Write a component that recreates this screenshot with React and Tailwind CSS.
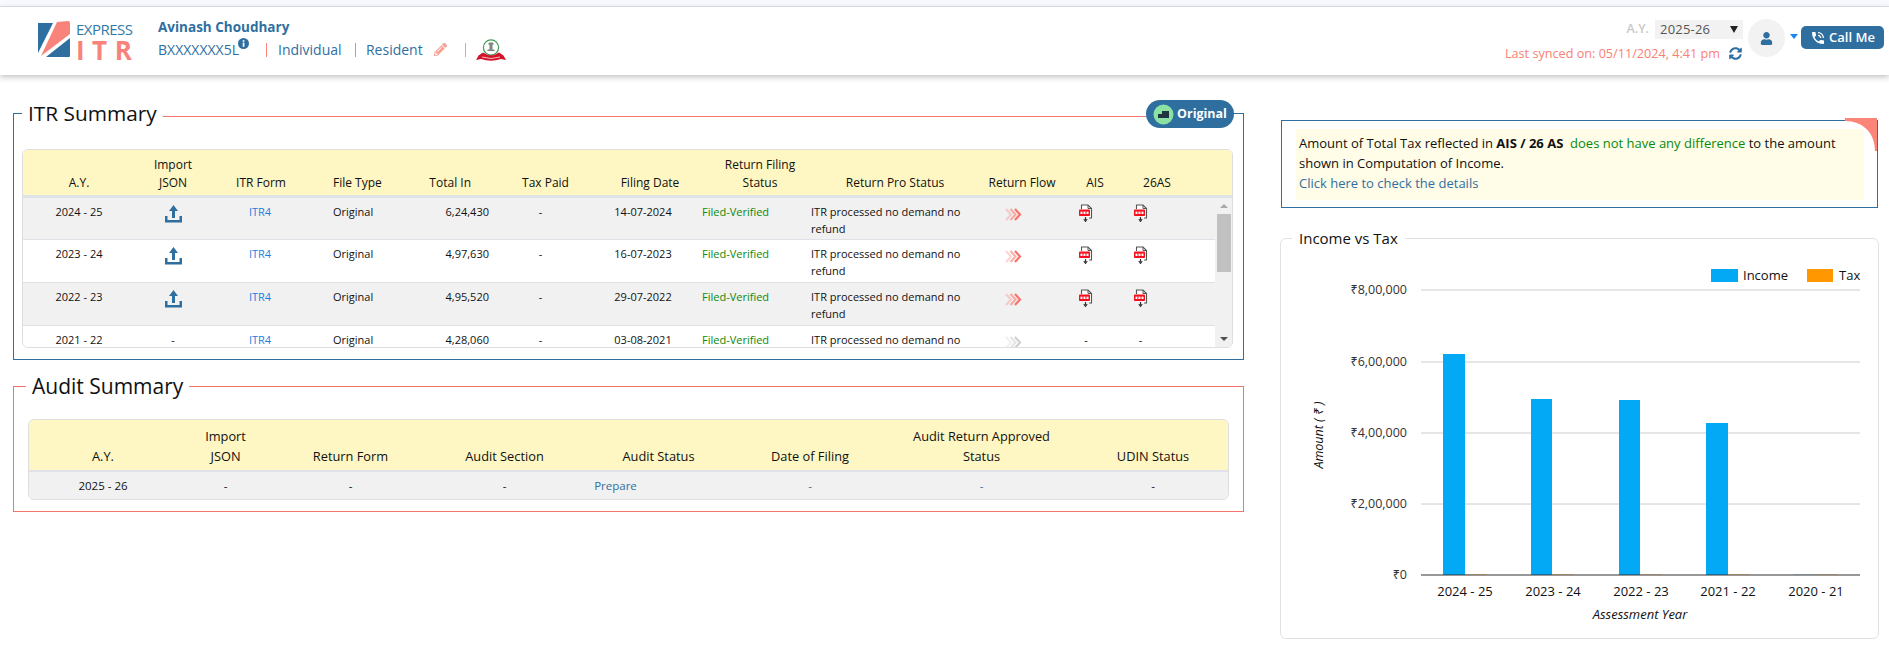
import React from "react";
import { FaPencilAlt, FaSyncAlt, FaUser } from "react-icons/fa";
import { MdPhoneInTalk } from "react-icons/md";

const FONT = "font-['Open_Sans','Noto_Sans',sans-serif]";

function Upload() {
  return (
    <svg width="17" height="18" viewBox="0 0 17 18" fill="#2f6f9f" className="mt-[2px]">
      <path d="M8.5 0 L13 6 H10 V13 H7 V6 H4 Z" />
      <path d="M0 11 H2.5 V15 H14.5 V11 H17 V17.5 H0 Z" />
    </svg>
  );
}

function Chevrons({ grey }) {
  const c = grey ? "#cfcfcf" : "#f8736a";
  return (
    <svg width="17" height="13" viewBox="0 0 17 13" fill="none" strokeWidth="2.2">
      <path d="M1 1 L6 6.5 L1 12" stroke={c} opacity=".3" />
      <path d="M5.5 1 L10.5 6.5 L5.5 12" stroke={c} opacity=".55" />
      <path d="M10 1 L15 6.5 L10 12" stroke={c} />
    </svg>
  );
}

function Pdf() {
  return (
    <svg width="14" height="18" viewBox="0 0 14 18" className="mt-[1px]">
      <path d="M2.5 5 V1 H9 L12.5 4.5 V14 H10" fill="#fff" stroke="#555" strokeWidth="1.1" />
      <path d="M9 1 V4.5 H12.5" fill="none" stroke="#555" strokeWidth="1" />
      <rect x="0" y="5.5" width="11" height="6.5" rx=".8" fill="#f5101c" />
      <rect x="1.5" y="7.6" width="2" height="2.4" fill="#fff" />
      <rect x="4.5" y="7.6" width="2" height="2.4" fill="#fff" />
      <rect x="7.5" y="7.6" width="2" height="2.4" fill="#fff" />
      <path d="M6.5 13 V16 M4.8 15 L6.5 17.5 L8.2 15" stroke="#333" strokeWidth="1.1" fill="none" />
    </svg>
  );
}

function Emblem() {
  return (
    <svg width="32" height="23" viewBox="0 0 32 23">
      <circle cx="16" cy="8.5" r="7.6" fill="#fff" stroke="#3f9a55" strokeWidth="1.2" />
      <path d="M14 3.5 h4 l1 2 h-1.5 v5 h2 v1.5 h-7 V10.5 h2 v-5 H13 Z" fill="#7b867e" />
      <path d="M1 21 L3.5 16.5 L8 13.5 Q16 19 24 13.5 L28.5 16.5 L31 21 L26 20 Q16 23.5 6 20 Z" fill="#d3152b" />
      <path d="M7 18 Q16 21 25 18" stroke="#fff" strokeWidth=".7" fill="none" />
    </svg>
  );
}

function OriginalIcon() {
  return (
    <svg width="21" height="21" viewBox="0 0 21 21">
      <circle cx="10.5" cy="10.5" r="10" fill="#8be0a4" />
      <path d="M5 10 H9 V7 H16 V14 H5 Z" fill="#20343f" />
    </svg>
  );
}

const itrCols = "grid-cols-[112px_76px_100px_99px_81px_109px_100px_110px_170px_84px_62px_62px_1fr]";

const itrRows = [
  ["2024 - 25", true, "6,24,430", "14-07-2024", true],
  ["2023 - 24", true, "4,97,630", "16-07-2023", true],
  ["2022 - 23", true, "4,95,520", "29-07-2022", true],
  ["2021 - 22", false, "4,28,060", "03-08-2021", false],
];

function ItrTable() {
  return (
    <div className="border border-[#dedede] rounded-[6px] overflow-hidden h-[199px] text-[#111]">
      <div className={`grid ${itrCols} h-[48px] bg-[#fef7c3] text-[12px] font-medium leading-[18px] text-center items-end pb-[3px] border-b-[3px] border-[#dfe2e8]`}>
        <div>A.Y.</div>
        <div>Import<br />JSON</div>
        <div>ITR Form</div>
        <div className="text-left pl-[22px]">File Type</div>
        <div className="text-right pr-[20px]">Total In</div>
        <div>Tax Paid</div>
        <div>Filing Date</div>
        <div className="pl-[10px]">Return Filing<br />Status</div>
        <div>Return Pro Status</div>
        <div>Return Flow</div>
        <div>AIS</div>
        <div>26AS</div>
        <div />
      </div>
      <div className="flex h-[149px]">
        <div className="flex-1 overflow-hidden">
          {itrRows.map((r, i) => (
            <div key={r[0]} className={`grid ${itrCols} ${i === 0 ? "h-[42px]" : "h-[43px]"} pt-[5px] border-b border-[#dee2e6] text-[11px] leading-[17px] text-center ${i % 2 === 0 ? "bg-[#f1f1f1]" : "bg-white"}`}>
              <div>{r[0]}</div>
              <div className="flex justify-center">{r[1] ? <Upload /> : "-"}</div>
              <div className="text-[#1a7fe0] pr-[2px]">ITR4</div>
              <div className="text-left pl-[22px]">Original</div>
              <div className="text-right pr-[2px]">{r[2]}</div>
              <div className="pr-[10px]">-</div>
              <div className="pr-[14px]">{r[3]}</div>
              <div className="text-left pl-[2px] text-[#0a8a0a] font-medium">Filed-Verified</div>
              <div className="text-left pl-[1px] pr-[8px]">ITR processed no demand no refund</div>
              <div className="flex justify-center pr-[18px] pt-[5px]"><Chevrons grey={!r[4]} /></div>
              <div className="flex justify-center pr-[18px]">{r[4] ? <Pdf /> : "-"}</div>
              <div className="flex justify-center pr-[33px]">{r[4] ? <Pdf /> : "-"}</div>
              <div />
            </div>
          ))}
        </div>
        <div className="w-[17px] bg-[#f1f1f1] flex flex-col items-center shrink-0">
          <div className="h-[16px] flex items-center justify-center">
            <div className="w-0 h-0 border-x-[4px] border-x-transparent border-b-[4px] border-b-[#a8a8a8]" />
          </div>
          <div className="w-[14px] h-[58px] bg-[#c1c1c1]" />
          <div className="flex-1" />
          <div className="h-[16px] flex items-center justify-center">
            <div className="w-0 h-0 border-x-[4px] border-x-transparent border-t-[4px] border-t-[#505050]" />
          </div>
        </div>
      </div>
    </div>
  );
}

function AuditTable() {
  const cols = "grid-cols-[148px_97px_153px_155px_153px_150px_193px_1fr]";
  return (
    <div className="border border-[#dedede] rounded-[6px] overflow-hidden text-[#111] text-[12.8px]">
      <div className={`grid ${cols} h-[52px] bg-[#fef7c3] font-medium leading-[20px] text-center items-end pb-[4px] border-b-[2px] border-[#dfe2e8]`}>
        <div>A.Y.</div>
        <div>Import<br />JSON</div>
        <div>Return Form</div>
        <div>Audit Section</div>
        <div>Audit Status</div>
        <div>Date of Filing</div>
        <div>Audit Return Approved<br />Status</div>
        <div>UDIN Status</div>
      </div>
      <div className={`grid ${cols} h-[27px] pt-[1px] bg-[#f1f1f1] items-center text-center text-[11.5px]`}>
        <div>2025 - 26</div>
        <div>-</div>
        <div>-</div>
        <div>-</div>
        <div className="text-[#2f6f9f] font-medium pr-[86px]">Prepare</div>
        <div className="text-[#2f6f9f]">-</div>
        <div className="text-[#2f6f9f]">-</div>
        <div>-</div>
      </div>
    </div>
  );
}

function Chart() {
  const ox = 1281, oy = 239;
  const X = (x) => x - ox, Y = (y) => y - oy;
  const grid = [[290, "₹8,00,000"], [362, "₹6,00,000"], [433, "₹4,00,000"], [504, "₹2,00,000"]];
  const bars = [[1443, 22, 354], [1531, 21, 399], [1619, 21, 400], [1706, 22, 423]];
  const ticks = [[1465, "2024 - 25"], [1553, "2023 - 24"], [1641, "2022 - 23"], [1728, "2021 - 22"], [1816, "2020 - 21"]];
  return (
    <svg width="597" height="399" viewBox="0 0 597 399" className="block" fontFamily="'Open Sans','Noto Sans',sans-serif">
      {grid.map(([y, t]) => (
        <g key={y}>
          <line x1={X(1421)} x2={X(1860)} y1={Y(y)} y2={Y(y)} stroke="#cccccc" />
          <text x={X(1407)} y={Y(y) + 4} textAnchor="end" fontSize="12.5" fill="#333">{t}</text>
        </g>
      ))}
      <text x={X(1407)} y={Y(575) + 4} textAnchor="end" fontSize="12.5" fill="#333">₹0</text>
      {bars.map(([x, w, top]) => (
        <g key={x}>
          <rect x={X(x)} y={Y(top)} width={w} height={575 - top} fill="#03a9f4" />
          <rect x={X(x + w)} y={Y(574)} width={22} height={1} fill="#ffd9a0" />
        </g>
      ))}
      <rect x={X(1793)} y={Y(574)} width={22} height={1} fill="#bfe6f8" />
      <rect x={X(1815)} y={Y(574)} width={22} height={1} fill="#ffd9a0" />
      <line x1={X(1421)} x2={X(1860)} y1={Y(575)} y2={Y(575)} stroke="#333" />
      {ticks.map(([x, t]) => (
        <text key={t} x={X(x)} y={Y(596)} textAnchor="middle" fontSize="13" fill="#111">{t}</text>
      ))}
      <text x={X(1640)} y={Y(619)} textAnchor="middle" fontSize="13" fontStyle="italic" fill="#111">Assessment Year</text>
      <text transform={`translate(${X(1323)} ${Y(435)}) rotate(-90)`} textAnchor="middle" fontSize="12.5" fontStyle="italic" fill="#111">Amount ( ₹ )</text>
      <rect x={X(1711)} y={Y(269)} width="27" height="13" fill="#03a9f4" />
      <text x={X(1743)} y={Y(280)} fontSize="13" fill="#111">Income</text>
      <rect x={X(1807)} y={Y(269)} width="26" height="13" fill="#ff9800" />
      <text x={X(1839)} y={Y(280)} fontSize="13" fill="#111">Tax</text>
    </svg>
  );
}

export default function App() {
  return (
    <div className={`${FONT} w-[1889px] h-[652px] bg-white overflow-hidden`}>
      <div className="h-[7px] bg-[#f7f9fe] border-b border-[#dfe5f0]" />
      <header className="h-[68px] bg-white shadow-[0_2px_6px_rgba(0,0,0,0.25)] flex justify-between relative">
        <div className="flex">
          <div className="ml-[37px] mt-[14px] flex w-[121px]">
            <svg width="33" height="36" viewBox="0 0 33 36" className="shrink-0">
              <path d="M1 2 H16 L1 32 Z" fill="#2f6f9f" />
              <path d="M20 1 L31 0 Q33 0 33 2 V13 L4 35 Z" fill="#f8837a" />
              <path d="M33 17 V35 Q33 36 32 36 H9 Z" fill="#2f6f9f" />
            </svg>
            <div className="ml-[6px] mt-[1px] flex flex-col">
              <span className="text-[15px] leading-[14px] text-[#2f7aa8] tracking-[-0.5px] font-medium">EXPRESS</span>
              <span className="mt-[2px] text-[26px] leading-[24px] text-[#f8837a] font-bold tracking-[7.5px]">ITR</span>
            </div>
          </div>
          <div className="pt-[11px] text-[#2f6f9f]">
            <div className="text-[13.5px] font-bold leading-[18px]">Avinash Choudhary</div>
            <div className="flex items-center mt-[1px] text-[14px] leading-[20px]">
              <span>BXXXXXXX5L</span>
              <svg width="11" height="11" viewBox="0 0 11 11" className="ml-[-1px] mb-[12px]">
                <circle cx="5.5" cy="5.5" r="5.5" fill="#2f6f9f" />
                <rect x="4.7" y="4.6" width="1.7" height="4.2" fill="#fff" />
                <rect x="4.7" y="2.2" width="1.7" height="1.6" fill="#fff" />
              </svg>
              <span className="ml-[17px] w-px h-[14px] bg-[#f8837a]" />
              <span className="ml-[11px] w-[65px]">Individual</span>
              <span className="ml-[12px] w-px h-[14px] bg-[#f8837a]" />
              <span className="ml-[10px] w-[56px]">Resident</span>
              <FaPencilAlt className="ml-[12px] text-[#f8a093] text-[13px]" />
              <span className="ml-[18px] w-px h-[14px] bg-[#f8a65a]" />
              <span className="ml-[9px] mt-[2px]"><Emblem /></span>
            </div>
          </div>
        </div>
        <div className="flex pr-[5px]">
          <div className="flex flex-col items-end pt-[13px]">
            <div className="flex items-center">
              <span className="text-[12.5px] font-semibold text-[#c9c9c9] mr-[6px]">A.Y.</span>
              <div className="w-[88px] h-[19px] bg-[#f2f2f2] flex items-center justify-between pl-[5px] pr-[5px] text-[13px] text-[#555]">
                <span className="tracking-[0.2px]">2025-26</span>
                <span className="w-0 h-0 border-x-[4.5px] border-x-transparent border-t-[7px] border-t-[#222]" />
              </div>
            </div>
            <div className="flex items-center mt-[4px] mr-[1px]">
              <span className="text-[12.65px] text-[#fb7f74] leading-[20px]">Last synced on: 05/11/2024, 4:41 pm</span>
              <FaSyncAlt className="ml-[9px] text-[#2f6f9f] text-[13px]" />
            </div>
          </div>
          <div className="ml-[5px] mt-[12px] w-[37px] h-[38px] rounded-full bg-[#f2f2f2] flex items-center justify-center">
            <FaUser className="text-[#2f6f9f] text-[13px]" />
          </div>
          <div className="ml-[5px] mt-[27px] w-0 h-0 border-x-[4.5px] border-x-transparent border-t-[5px] border-t-[#1a86f0]" />
          <div className="ml-[3px] mt-[19px] w-[83px] h-[23px] rounded-[5px] bg-[#2f6f9f] text-white text-[13px] font-semibold flex items-center justify-center gap-[3px]">
            <MdPhoneInTalk className="text-[16px]" />
            <span>Call Me</span>
          </div>
        </div>
      </header>

      <main className="flex items-start">
        <div className="ml-[13px] w-[1231px] mt-[38px]">
          <section className="relative border border-[#2f6f9f] h-[247px] pl-[8px] pr-[10px] pt-[35px]">
            <div className="absolute left-[8px] right-[97px] -top-[2px] h-[6px] bg-white">
              <div className="absolute left-[141px] right-0 top-[4px] h-px bg-[#f4736a]" />
            </div>
            <h2 className="absolute left-[14px] -top-[16px] text-[20.8px] leading-[30px] font-normal text-[#111]">ITR Summary</h2>
            <div className="absolute right-[9px] -top-[14px] w-[88px] h-[28px] rounded-full bg-[#2f6f9f] text-white text-[12.5px] font-bold flex items-center pl-[7px] gap-[3px]">
              <OriginalIcon />
              <span>Original</span>
            </div>
            <ItrTable />
          </section>

          <section className="relative border border-[#f4736a] mt-[26px] h-[126px] pt-[32px] px-[14px]">
            <h2 className="absolute left-[12px] -top-[16px] bg-white px-[6px] text-[21px] leading-[30px] font-normal text-[#111]">Audit Summary</h2>
            <AuditTable />
          </section>
        </div>

        <div className="ml-[36px] w-[599px] mt-[45px]">
          <div className="relative ml-[1px] w-[597px] h-[88px] border border-[#2f6f9f] pt-[8px] pl-[14px] pr-[13px]">
            <div className="h-[71px] bg-[#fffce8] pl-[3px] pt-[4px] text-[13px] leading-[20px] text-[#111]">
              Amount of Total Tax reflected in <b className="font-bold">AIS / 26 AS</b>&nbsp; <span className="text-[#0a8a0a]">does not have any difference</span> to the amount<br />
              shown in Computation of Income.<br />
              <span className="text-[#2f6f9f]">Click here to check the details</span>
            </div>
            <svg width="32" height="33" viewBox="0 0 32 33" className="absolute right-0 -top-[3px]">
              <path d="M0 0 H32 V33 H30 C30 15 18 3 0 3 Z" fill="#fb8578" />
            </svg>
          </div>
          <div className="relative mt-[30px] border border-[#e2e2e2] rounded-[6px] h-[401px]">
            <div className="absolute left-[11px] -top-[11px] bg-white px-[7px] text-[15px] leading-[20px] text-[#111]">Income vs Tax</div>
            <Chart />
          </div>
        </div>
      </main>
    </div>
  );
}
